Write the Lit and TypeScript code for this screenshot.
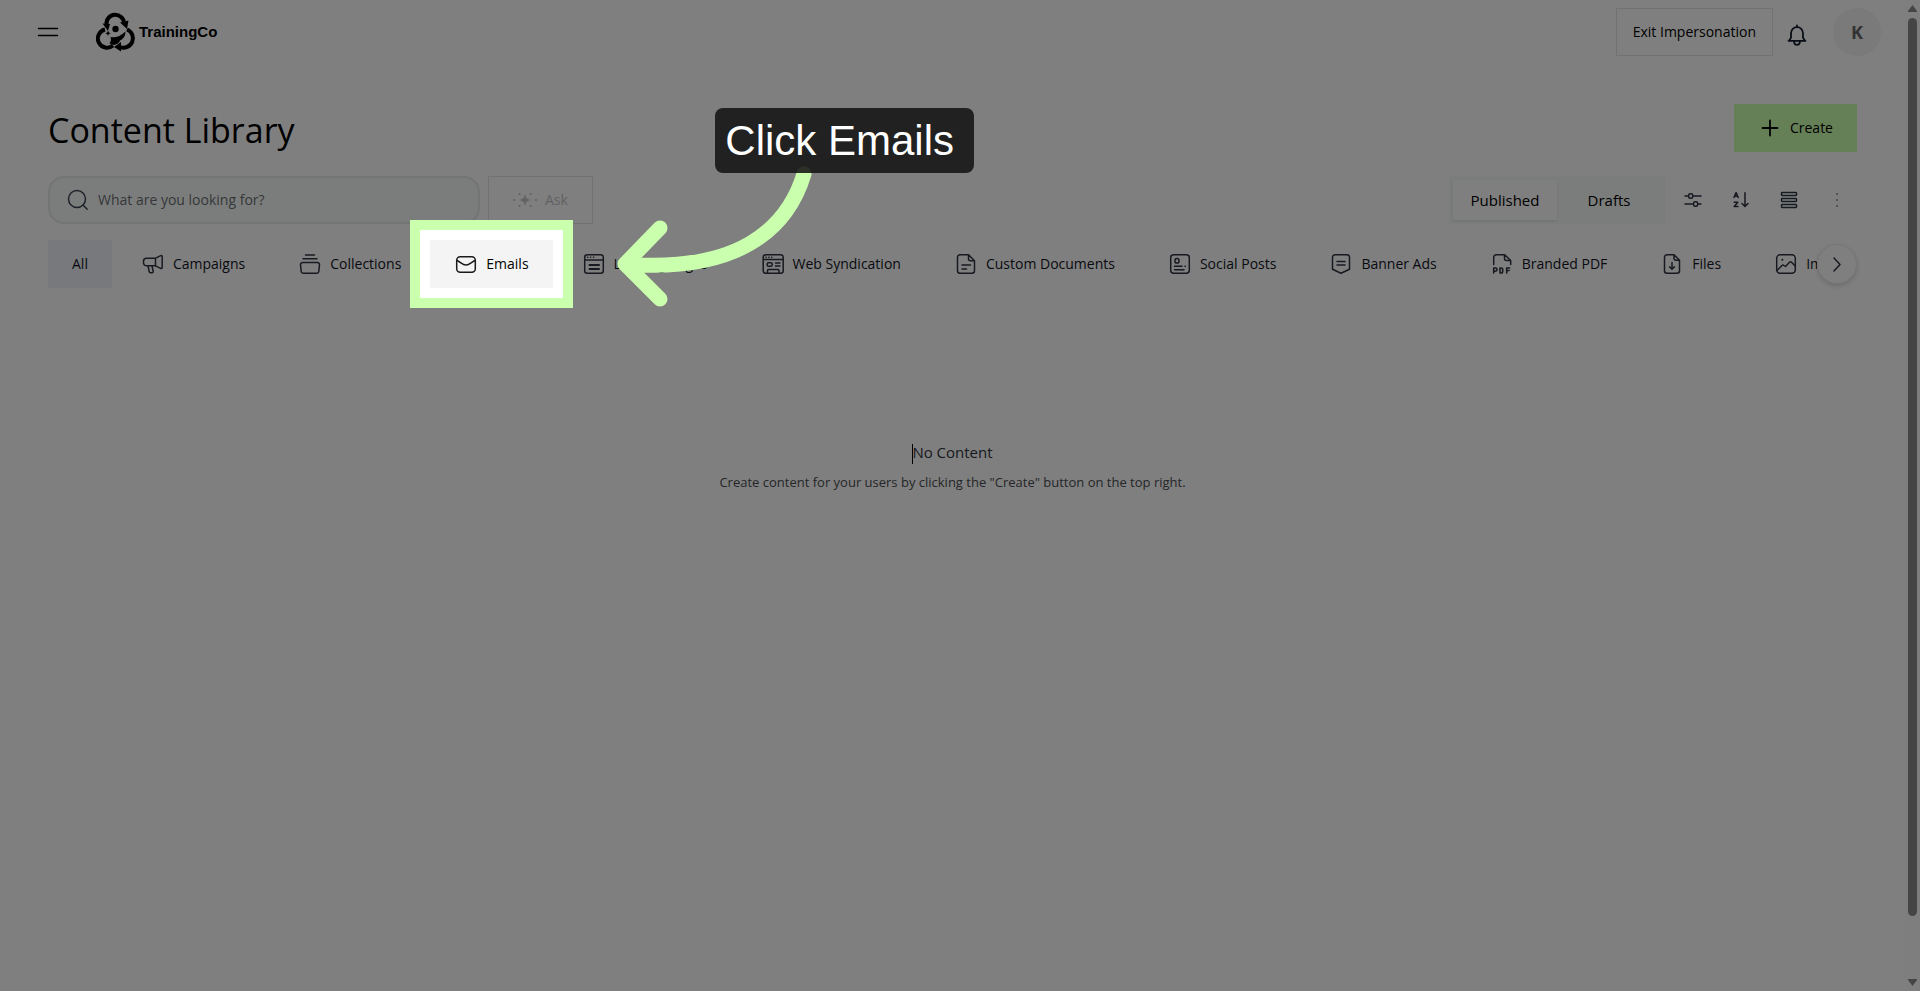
import { LitElement, html, css, svg, nothing } from "lit";
import type { SVGTemplateResult } from "lit";
import { customElement, property, state } from "lit/decorators.js";
import { classMap } from "lit/directives/class-map.js";

interface Tab {
  id: string;
  label: string;
  icon?: string;
}

const TABS: Tab[] = [
  { id: "all", label: "All" },
  { id: "campaigns", label: "Campaigns", icon: "megaphone" },
  { id: "collections", label: "Collections", icon: "stack" },
  { id: "emails", label: "Emails", icon: "mail" },
  { id: "landing", label: "Landing Pages", icon: "page" },
  { id: "web", label: "Web Syndication", icon: "syndication" },
  { id: "documents", label: "Custom Documents", icon: "document" },
  { id: "social", label: "Social Posts", icon: "social" },
  { id: "banner", label: "Banner Ads", icon: "banner" },
  { id: "pdf", label: "Branded PDF", icon: "pdf" },
  { id: "files", label: "Files", icon: "file" },
  { id: "images", label: "Images", icon: "image" },
];

// all icons share a 24 x 24 box
const ICONS: Record<string, SVGTemplateResult> = {
  menu: svg`<path d="M2.500 8.500h19M2.500 15.500h19" />`,
  bell: svg`
    <path d="M12 2.500v1.600M12 4.200a6 6 0 0 0-6 6v4.600l-2 3h16l-2-3v-4.600a6 6 0 0 0-6-6zM3.500 17.800h17" stroke-width="1.800" />
    <path d="M9.200 18v1a2.800 2.800 0 0 0 5.600 0v-1" stroke-width="1.800" />
  `,
  plus: svg`<path d="M12 4.500v15M4.500 12h15" stroke-width="1.800" />`,
  search: svg`<circle cx="11" cy="11" r="8.500" /><path d="M17.200 17.200l4 4" />`,
  sparkle: svg`
    <path d="M12 5c.5 4.800 1.700 6.300 6.500 7-4.800.7-6 2.200-6.500 7-.5-4.800-1.700-6.300-6.500-7 4.800-.7 6-2.200 6.500-7z" fill="currentColor" stroke="none" />
    <path d="M1 12h.1M23 12h.1M6.500 6h.1M17.500 6h.1M6.500 18h.1M17.500 18h.1" stroke-width="2" />
  `,
  filter: svg`
    <path d="M4 8h3.500M12 8h8M4 16h8M17 16h3" />
    <rect x="7.700" y="5.700" width="4" height="4.600" rx="1.500" />
    <rect x="12.600" y="13.700" width="4" height="4.600" rx="1.500" />
  `,
  sort: svg`
    <path d="M5 9.500l1.900-4.700h.4l1.900 4.700M5.800 8.200h2.600M5.200 14.300h3.600l-3.600 4.200h3.800" />
    <path d="M16 4.800v13.500M13 15.500l3 3 3-3" />
  `,
  list: svg`
    <rect x="4.500" y="4.500" width="15" height="3" rx=".7" />
    <rect x="4.500" y="10.500" width="15" height="3" rx=".7" />
    <rect x="4.500" y="16.500" width="15" height="3" rx=".7" />
  `,
  dots: svg`<path d="M12 6h.1M12 12h.1M12 18h.1" stroke-width="1.500" />`,
  chevron: svg`<path d="M9 6l6 6.500-6 6.500" />`,
  megaphone: svg`
    <path d="M14.500 6.200H5.500a3 3 0 0 0-3 3v1.600a3 3 0 0 0 3 3h9M14.500 6.200v7.600M14.500 6.200l5.200-2.600a1 1 0 0 1 1.500.9v11a1 1 0 0 1-1.500.9l-5.200-2.600" />
    <path d="M7 13.800l1.200 5.700a1.500 1.500 0 0 0 1.500 1.200h1.500a1 1 0 0 0 1-1.200l-1.200-5.700" />
  `,
  stack: svg`
    <path d="M7.500 3h9M5 6.800h14" />
    <path d="M4.500 10.500h15a2 2 0 0 1 2 2.200l-.7 6.800a2 2 0 0 1-2 1.800H5.200a2 2 0 0 1-2-1.800l-.7-6.800a2 2 0 0 1 2-2.200z" />
  `,
  mail: svg`
    <rect x="2.700" y="4.700" width="18.600" height="15.600" rx="3.500" />
    <path d="M3 8.500c3 1 5.500 4.500 9 4.500s6-3.500 9-4.500" />
  `,
  page: svg`
    <rect x="2.700" y="2.700" width="18.600" height="18.600" rx="2.500" />
    <path d="M3 8h18M5.500 5.300h.2M8.500 5.300h.2M11.500 5.300h.2" />
    <path d="M7.500 13h9.500M7.500 17h9.500" stroke-width="2" />
  `,
  syndication: svg`
    <rect x="2.200" y="2.700" width="20" height="18.600" rx="2.500" />
    <path d="M2.500 7.500h19.500M5 5.200h.2M7.800 5.200h.2M10.600 5.200h.2M14.500 11h4.500M14.500 14h4.500" />
    <rect x="6.200" y="10.700" width="5" height="3.600" rx="1.300" />
    <path d="M6.500 21v-2.500a1 1 0 0 1 1-1h9.500a1 1 0 0 1 1 1V21" />
  `,
  document: svg`
    <path d="M14.500 2.700H6a2.500 2.500 0 0 0-2.500 2.500v13.600A2.500 2.500 0 0 0 6 21.300h12a2.500 2.500 0 0 0 2.500-2.500V8.700l-6-6v4a2 2 0 0 0 2 2h4" />
    <path d="M8 13h8.500M8 17h4.500" />
  `,
  social: svg`
    <rect x="2.700" y="2.700" width="18.600" height="18.600" rx="3" />
    <rect x="7" y="6.500" width="4" height="4.500" rx="1.800" />
    <path d="M6.500 14.200h7.500M17 14.200h.4M6.500 17.700h9.500" />
  `,
  banner: svg`
    <path d="M3.500 5.200A2.500 2.500 0 0 1 6 2.700h12a2.500 2.500 0 0 1 2.500 2.500v12L12 21.300l-8.500-4.100z" />
    <path d="M8 9.500h8M8 13h8" />
  `,
  pdf: svg`
    <path d="M3.700 12.500V5.200a2.500 2.500 0 0 1 2.500-2.500h8.500l6 5.800v4M14.500 2.700v3.800a2 2 0 0 0 2 2h4.200" />
    <path d="M3.700 21v-5h1.800a1.500 1.500 0 0 1 0 3.200H3.700M10 16v5h1.200a1.500 1.500 0 0 0 1.500-1.500v-2a1.500 1.500 0 0 0-1.500-1.500zM16.700 21v-5h3M16.700 18.500h2.500" stroke-width="1.600" />
  `,
  file: svg`
    <path d="M14 2.700H7a2.500 2.500 0 0 0-2.500 2.500v13.600A2.500 2.500 0 0 0 7 21.300h10a2.500 2.500 0 0 0 2.500-2.500V8.200L14 2.700v3.500a2 2 0 0 0 2 2h3.500" />
    <path d="M12 10.500v6.500M9.500 14.700l2.500 2.500 2.500-2.500" />
  `,
  image: svg`
    <rect x="2.700" y="2.700" width="18.600" height="18.600" rx="3.500" />
    <path d="M8.300 7.700h.1" stroke-width="2" />
    <path d="M3 18.500l5-5a1.500 1.500 0 0 1 2 0l1.500 1 4-4.300a1.500 1.500 0 0 1 2 0l3.700 3.800" />
  `,
};

@customElement("app-icon")
export class AppIcon extends LitElement {
  static styles = css`
    :host {
      display: block;
      flex: none;
      width: 24px;
      height: 24px;
    }

    svg {
      display: block;
      width: 100%;
      height: 100%;
      fill: none;
      stroke: currentColor;
      stroke-width: 1.5;
      stroke-linecap: round;
      stroke-linejoin: round;
    }
  `;

  @property({ type: String }) name: string = "";

  render() {
    return html`<svg viewBox="0 0 24 24" aria-hidden="true">
      ${ICONS[this.name] ?? nothing}
    </svg>`;
  }
}

@customElement("brand-logo")
export class BrandLogo extends LitElement {
  static styles = css`
    :host {
      display: block;
    }

    .brand {
      display: flex;
      align-items: center;
      gap: 3px;
      color: #000000;
      font: 700 15px/24px "Liberation Sans", sans-serif;
      text-decoration: none;
    }

    svg {
      display: block;
      width: 40px;
      height: 40px;
    }
  `;

  render() {
    return html`
      <a class="brand" href="#">
        <svg viewBox="0 0 40 40" aria-hidden="true">
          <g fill="none" stroke="#000" stroke-width="4">
            <path d="M10.500 12a8.700 8.700 0 0 1 17.500-1" />
            <path d="M31 17.500A9.200 9.200 0 1 1 24 35" />
            <path d="M9 17.500A9.200 9.200 0 1 0 17 33.500" />
          </g>
          <path d="M6.500 11.500l7.500.5-2 7zM24 10.500l8.500-2-1.500 8.500zM18 35l7-5v9.500z" />
          <circle cx="19.500" cy="17" r="3.200" />
          <path d="M12 18.500l.8 2 2 .7-2 .8-.8 2-.8-2-2-.8 2-.7z" />
          <path d="M29.500 19.500c0 5-2.500 7.500-5.500 9-.5 2-2.500 4-6 4.500-2 0-3.500-.8-4.500-2 1.500-1 1.800-3.500 1-6 4 1.200 10-.5 15-5.500z" />
        </svg>
        <span>TrainingCo</span>
      </a>
    `;
  }
}

// Tutorial step: dims the page round its parent and points an arrow at it
@customElement("step-hint")
export class StepHint extends LitElement {
  static styles = css`
    :host {
      position: absolute;
      z-index: 10;
      inset: -20px;
      border: 10px solid #caffae;
      box-shadow: 0 0 0 100vmax rgba(0, 0, 0, 0.5);
      pointer-events: none;
    }

    .arrow {
      position: absolute;
      left: 190px;
      top: -70px;
      width: 220px;
      height: 160px;
      fill: none;
      stroke: #caffae;
      stroke-width: 15;
      stroke-linecap: round;
      stroke-linejoin: round;
    }

    .callout {
      position: absolute;
      left: 295px;
      top: -122px;
      box-sizing: border-box;
      padding: 0 20px 0 10px;
      border-radius: 8px;
      background: rgba(20, 20, 20, 0.88);
      color: #ffffff;
      font: 400 42px/65px "Liberation Sans", sans-serif;
      white-space: nowrap;
    }
  `;

  @property({ type: String }) text: string = "";

  render() {
    return html`
      <svg class="arrow" viewBox="0 0 220 160" aria-hidden="true">
        <path d="M194 14C177 70 127 113 15 104M50 68L15 104l35 35" />
      </svg>
      <div class="callout" role="tooltip">${this.text}</div>
    `;
  }
}

@customElement("app-root")
export default class AppRoot extends LitElement {
  static styles = css`
    :host {
      display: flex;
      position: relative;
      min-height: 100vh;
      overflow: hidden;
      background: #ffffff;
      color: #000000;
      font: 400 14px/24px "Open Sans", "Noto Sans", sans-serif;
    }

    button {
      display: flex;
      align-items: center;
      justify-content: center;
      box-sizing: border-box;
      margin: 0;
      padding: 0;
      border: none;
      border-radius: 0;
      background: transparent;
      color: inherit;
      font: inherit;
      white-space: nowrap;
      cursor: pointer;
    }

    .page {
      flex: 1;
      min-width: 0;
    }

    .topbar {
      display: flex;
      align-items: center;
      height: 64px;
      padding: 0 24px 0 36px;
    }

    .topbar brand-logo {
      margin-left: 36px;
    }

    .account {
      display: flex;
      align-items: center;
      gap: 6px;
      margin-left: auto;
    }

    .outlined {
      height: 48px;
      padding: 0 16px;
      border: 1px solid #e4e5e5;
    }

    .icon-button {
      width: 48px;
      height: 48px;
      color: #2f3441;
    }

    .bell {
      width: 36px;
      padding-top: 6px;
      color: #131c2c;
    }

    .avatar {
      width: 48px;
      height: 48px;
      margin-left: 12px;
      border-radius: 50%;
      background: #f4f4f4;
      color: #666666;
      font-size: 18px;
      font-weight: 700;
    }

    main {
      padding: 40px 48px;
    }

    .heading,
    .toolbar {
      display: flex;
      align-items: center;
      justify-content: space-between;
    }

    h1 {
      margin: 0;
      padding-top: 4px;
      font-size: 34px;
      font-weight: 400;
      line-height: 44px;
    }

    .create {
      gap: 8px;
      height: 48px;
      padding: 0 24px;
      background: #caffae;
    }

    .toolbar {
      margin-top: 24px;
    }

    .finder,
    .actions {
      display: flex;
      align-items: center;
    }

    .finder {
      gap: 8px;
    }

    .actions {
      margin-right: -4px;
    }

    .search {
      display: flex;
      align-items: center;
      gap: 8px;
      box-sizing: border-box;
      width: 432px;
      height: 48px;
      padding: 0 16px;
      border: 2px solid #e6eae9;
      border-radius: 16px;
      background: #f7fbfa;
      color: #3d4452;
    }

    .search input {
      flex: 1;
      min-width: 0;
      padding: 0;
      border: none;
      outline: none;
      background: transparent;
      color: inherit;
      font: inherit;
    }

    .search input::placeholder {
      color: #6d6f73;
      opacity: 1;
    }

    .ask {
      gap: 8px;
      padding: 0 24px;
      color: #c2c4c6;
    }

    .segments {
      display: flex;
      box-sizing: border-box;
      height: 48px;
      margin-right: 4px;
      padding: 4px;
      background: #f7fbfa;
      font-size: 15px;
    }

    .segment {
      width: 104px;
    }

    .segment.active {
      background: #ffffff;
      box-shadow: 0 1px 3px rgba(0, 0, 0, 0.1);
    }

    .tabs {
      display: flex;
      gap: 5px;
      position: relative;
      margin-top: 16px;
      padding-right: 40px;
    }

    .tab {
      flex: none;
      position: relative;
      gap: 8px;
      height: 48px;
      padding: 0 24px;
      color: #12151f;
    }

    .tab app-icon {
      color: #2f3441;
    }

    .tab.active {
      background: #eff3f9;
    }

    .tab.current {
      background: #f4f4f4;
      color: #000000;
    }

    .tab.current app-icon {
      color: #1a1a1a;
    }

    /* the last tab runs under the scroll button */
    .tab:last-of-type {
      flex: 1 1 0;
      justify-content: flex-start;
      min-width: 0;
      padding-right: 0;
      overflow: hidden;
    }

    .next {
      position: absolute;
      right: 0;
      top: 4px;
      width: 40px;
      height: 40px;
      border: 1px solid #ececec;
      border-radius: 50%;
      background: #ffffff;
      box-shadow: 0 2px 5px rgba(0, 0, 0, 0.15);
      color: #2f3441;
    }

    .next-slot {
      width: 0;
      margin-left: -5px;
    }

    .empty {
      padding-top: 152px;
      color: #4a4d52;
      font-size: 13px;
      text-align: center;
    }

    .empty h2,
    .empty p {
      margin: 0 0 6px;
    }

    .empty h2 {
      color: #30333f;
      font-size: 15px;
      font-weight: 400;
    }

    .caret {
      display: inline-block;
      width: 1px;
      height: 20px;
      margin-right: -1px;
      background: #000000;
      vertical-align: middle;
    }

    .scrollbar {
      display: flex;
      flex-direction: column;
      align-items: center;
      box-sizing: border-box;
      width: 15px;
      padding: 5px 0;
      gap: 6px;
      background: #fcfcfc;
    }

    .scrollbar svg {
      display: block;
      width: 9px;
      height: 7px;
      fill: #8b8b8b;
    }

    .track {
      flex: 1;
      width: 9px;
    }

    .thumb {
      height: 94%;
      border-radius: 5px;
      background: #8b8b8b;
    }
  `;

  @state() active = "all";
  @state() view = "Published";

  render() {
    return html`
      <div class="page">
        ${this.renderTopbar()}
        <main>
          <div class="heading">
            <h1>Content Library</h1>
            <button class="create">
              <app-icon name="plus"></app-icon>
              <span>Create</span>
            </button>
          </div>
          ${this.renderToolbar()}
          <div class="tabs">
            ${TABS.map((tab) => this.renderTab(tab))}
            <div class="next-slot">
              <button class="next" aria-label="More types">
                <app-icon name="chevron"></app-icon>
              </button>
            </div>
          </div>
          <section class="empty">
            <h2><span class="caret"></span>No Content</h2>
            <p>
              Create content for your users by clicking the "Create" button on
              the top right.
            </p>
          </section>
        </main>
      </div>
      <div class="scrollbar" aria-hidden="true">
        <svg viewBox="0 0 9 7"><path d="M4.500 0L9 6v1H0V6z" /></svg>
        <div class="track"><div class="thumb"></div></div>
        <svg viewBox="0 0 9 7"><path d="M4.500 7L9 1V0H0v1z" /></svg>
      </div>
    `;
  }

  renderTopbar() {
    return html`
      <header class="topbar">
        <button aria-label="Menu"><app-icon name="menu"></app-icon></button>
        <brand-logo></brand-logo>
        <div class="account">
          <button class="outlined">Exit Impersonation</button>
          <button class="icon-button bell" aria-label="Notifications">
            <app-icon name="bell"></app-icon>
          </button>
          <button class="avatar" aria-label="Account">K</button>
        </div>
      </header>
    `;
  }

  renderToolbar() {
    return html`
      <div class="toolbar">
        <div class="finder">
          <label class="search">
            <app-icon name="search"></app-icon>
            <input
              type="text"
              aria-label="Search"
              placeholder="What are you looking for?"
            />
          </label>
          <button class="outlined ask" disabled>
            <app-icon name="sparkle"></app-icon>
            <span>Ask</span>
          </button>
        </div>
        <div class="actions">
          <div class="segments">
            ${["Published", "Drafts"].map(
              (name) => html`
                <button
                  class=${classMap({
                    segment: true,
                    active: this.view === name,
                  })}
                  @click=${() => (this.view = name)}
                >
                  ${name}
                </button>
              `
            )}
          </div>
          ${["filter", "sort", "list", "dots"].map(
            (name) => html`
              <button class="icon-button" aria-label=${name}>
                <app-icon name=${name}></app-icon>
              </button>
            `
          )}
        </div>
      </div>
    `;
  }

  renderTab(tab: Tab) {
    const hinted = tab.id === "emails";
    const classes = {
      tab: true,
      active: this.active === tab.id,
      current: hinted,
    };
    return html`
      <button class=${classMap(classes)} @click=${() => (this.active = tab.id)}>
        ${tab.icon ? html`<app-icon name=${tab.icon}></app-icon>` : nothing}
        <span>${tab.label}</span>
        ${hinted ? html`<step-hint text="Click Emails"></step-hint>` : nothing}
      </button>
    `;
  }
}
